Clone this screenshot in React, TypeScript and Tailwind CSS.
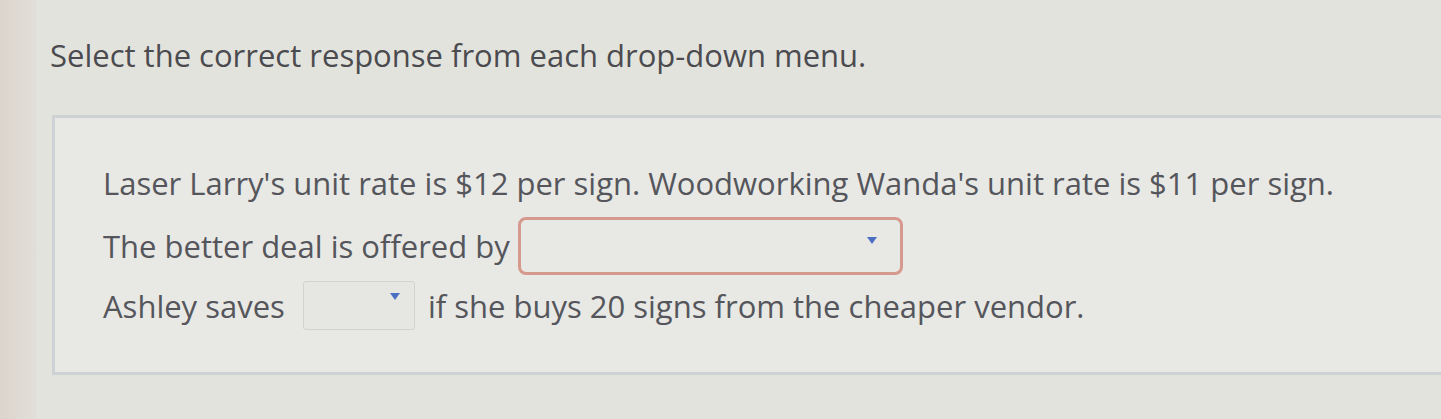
function Caret() {
  return (
    <svg width="10" height="8" viewBox="0 0 10 8" className="shrink-0">
      <path d="M0 0 H10 L5 7 Z" fill="#4c6fc4" />
    </svg>
  );
}

function Dropdown({ wide }: { wide?: boolean }) {
  if (wide) {
    return (
      <span className="ml-[8px] inline-flex h-[58px] w-[385px] items-start justify-end rounded-[8px] border-[3px] border-[#d6998d] bg-[#e8e8e4] pt-[17px] pr-[23px]">
        <Caret />
      </span>
    );
  }
  return (
    <span className="ml-[18px] mr-[13px] inline-flex h-[49px] w-[112px] items-start justify-end rounded-[3px] border border-[#d2d3cf] bg-[#e6e6e2] pt-[11px] pr-[14px]">
      <Caret />
    </span>
  );
}

export default function App() {
  return (
    <div
      className="flex h-[419px] w-[1441px] overflow-hidden bg-[#e3e3de] text-[#55565c]"
      style={{ fontFamily: '"Open Sans", "Liberation Sans", sans-serif' }}
    >
      <div className="w-[36px] shrink-0 bg-gradient-to-r from-[#dcd5cd] to-[#e1ded8]" />
      <div className="flex flex-1 flex-col">
        <h1 className="pl-[14px] pt-[35px] text-[31px] leading-[40px] font-normal text-[#4b4b4f]">
          Select the correct response from each drop-down menu.
        </h1>
        <section className="ml-[16px] mt-[40px] flex h-[260px] flex-col border-t-[3px] border-l-[3px] border-b-[3px] border-[#cfd2d4] bg-[#e8e8e4] pl-[48px] pt-[45px] text-[31px]">
          <p className="leading-[40px]">
            Laser Larry's unit rate is $12 per sign. Woodworking Wanda's unit rate is $11 per sign.
          </p>
          <p className="mt-[14px] flex items-center leading-[40px]">
            The better deal is offered by
            <Dropdown wide />
          </p>
          <p className="mt-[6px] flex items-center leading-[40px]">
            Ashley saves
            <Dropdown />
            if she buys 20 signs from the cheaper vendor.
          </p>
        </section>
      </div>
    </div>
  );
}
